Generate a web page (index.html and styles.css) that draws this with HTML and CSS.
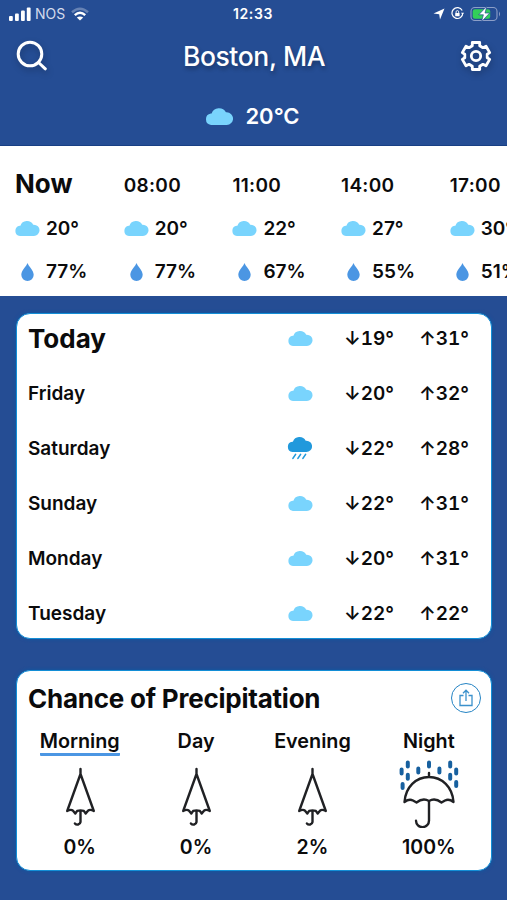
FILE: index.html
```html
<!DOCTYPE html>
<html lang="en">
<head>
  <meta charset="UTF-8" />
  <meta name="viewport" content="width=device-width, initial-scale=1.0"/>
  <title>Weather - Boston, MA</title>
  <link rel="stylesheet" href="styles.css">
</head>
<body>
  <!-- Shared icons -->
  <svg class="sprite" aria-hidden="true">
    <symbol id="cloud" viewBox="0 0 25 16">
      <path d="M5.400 16A5.200 5.200 0 0 1 5.300 5.700h.6A7 7 0 0 1 18.700 4.700h.7A5.600 5.600 0 0 1 19.400 16z"/>
    </symbol>
    <symbol id="rain" viewBox="0 0 25 24">
      <path d="M5.400 16A5.200 5.200 0 0 1 5.300 5.700h.6A7 7 0 0 1 18.700 4.700h.7A5.600 5.600 0 0 1 19.400 16z"/>
      <path d="M8.600 18.400l-2.700 4M13.600 18.400l-2.700 4M18.600 18.400l-2.700 4" stroke="currentColor" stroke-width="1.600" stroke-linecap="round"/>
    </symbol>
    <symbol id="drop" viewBox="0 0 13 18">
      <path d="M6.500 0C7.600 3.400 12.700 7.400 12.700 11.800a6.200 6.200 0 0 1-12.400 0C.3 7.400 5.400 3.400 6.500 0z"/>
    </symbol>
    <symbol id="umbrella-closed" viewBox="0 0 60 68">
      <path d="M30.500 9v5L17.200 51q3.800-2 5.800-.3l2.300 2.800 1.900-2.600q3.300-1 6.600 0l1.900 2.600 2.300-2.800q2-1.700 5.800.3L30.500 14M30.500 50.500v11.500a3.200 3.200 0 0 1-5.600 1.500"/>
    </symbol>
    <symbol id="umbrella-open" viewBox="0 0 60 68">
      <path d="M30 13v4M5.500 42C6.500 27 17 17 30 17s23.500 10 24.500 25q-4.500-3.500-8.500-1.500l-3.500 2q-6.500-5-12.500-1.500-6-3.500-12.500 1.500l-3.500-2q-4-2-8.500 1.500zM30 41v19.500a6.500 6.500 0 0 1-13 .2"/>
      <path class="drops" d="M8.800 2.500v4M2.600 9.500v4M8.800 14.700v4M3.600 24v4M19.300 8.500v4M30 2.500v4M40.400 8.500v4M51.200 2.500v4M57.200 9.500v4M51.200 14.700v4M57.200 22v4"/>
    </symbol>
  </svg>

  <div class="app">
    <header>
      <div class="status-bar">
        <div class="carrier">
          <svg width="22" height="14" viewBox="0 0 22 14" fill="#fff">
            <rect x="0" y="9" width="3.800" height="5" rx="1"/>
            <rect x="6" y="6.500" width="3.800" height="7.500" rx="1"/>
            <rect x="12" y="3.500" width="3.800" height="10.500" rx="1"/>
            <rect x="17.800" y="0.500" width="3.800" height="13.500" rx="1"/>
          </svg>
          <span class="carrier-name">NOS</span>
          <svg class="wifi" width="18" height="14" viewBox="0 0 18 14" fill="none" stroke="#fff" stroke-width="2.500">
            <path d="M1 5.200q8-7 16 0" opacity=".3"/>
            <path d="M3.800 8.100q5.200-4.600 10.400 0"/>
            <path d="M9 13.500L5.800 10.600q3.200-2.400 6.400 0z" fill="#fff" stroke="none"/>
          </svg>
        </div>
        <span class="clock">12:33</span>
        <div class="indicators">
          <svg width="12" height="12" viewBox="0 0 12 12" fill="#fff">
            <path d="M11.500.5L7 11.500 6.200 6.200.5 5.500z"/>
          </svg>
          <svg width="13" height="13" viewBox="0 0 13 13" fill="none" stroke="#fff">
            <path d="M11.200 3.600a5.400 5.400 0 1 0 .6 2.400" stroke-width="1.200"/>
            <path d="M10 5.700h3l-1.500 2z" fill="#fff" stroke="none"/>
            <rect x="4.200" y="5.900" width="4.400" height="3.300" rx=".5" fill="#fff" stroke="none"/>
            <path d="M5.100 6V4.900a1.300 1.300 0 0 1 2.600 0V6" stroke-width=".9"/>
          </svg>
          <svg width="31" height="16" viewBox="0 0 31 16">
            <rect x="1" y="1.500" width="26" height="13" rx="3.800" fill="none" stroke="#8d9fc8" stroke-width="1.100"/>
            <path d="M29 5.500q2 2.500 0 5z" fill="#8d9fc8"/>
            <rect x="2.700" y="3.200" width="17.500" height="9.600" rx="2.200" fill="#32cf59"/>
            <path d="M16.800.3L8.700 8.800h4.700L11.500 15.700 19.700 7H15z" fill="#fff" stroke="#254d94" stroke-width=".7"/>
          </svg>
        </div>
      </div>

      <div class="nav-bar">
        <svg class="nav-icon" width="32" height="32" viewBox="0 0 32 32" fill="none" stroke="#fff" stroke-width="3" stroke-linecap="round">
          <circle cx="14" cy="14" r="11.800"/>
          <path d="M22.500 22.500l6.800 6.300"/>
        </svg>
        <h1>Boston, MA</h1>
        <svg class="nav-icon" width="32" height="32" viewBox="0 0 32 32" fill="none" stroke="#fff" stroke-width="2.800" stroke-linejoin="round">
          <path d="M12.300 2.500h7.400v3.300l3.200 1.900 3.100-1.500 3.700 6.400-2.500 1.600v3.600l2.500 1.600-3.700 6.400-3.100-1.500-3.200 1.900v3.300h-7.400v-3.300l-3.200-1.900L6 25.800l-3.700-6.400 2.500-1.600v-3.600l-2.500-1.600L6 6.200l3.100 1.500 3.200-1.900z"/>
          <circle cx="16" cy="16" r="4.700"/>
        </svg>
      </div>

      <div class="current">
        <svg class="cloud"><use href="#cloud"/></svg>
        <span>20°C</span>
      </div>
    </header>

    <!-- Hourly forecast -->
    <section class="hourly">
      <div class="hour now">
        <h2>Now</h2>
        <p><svg class="cloud"><use href="#cloud"/></svg>20°</p>
        <p><svg class="drop"><use href="#drop"/></svg>77%</p>
      </div>
      <div class="hour">
        <h3>08:00</h3>
        <p><svg class="cloud"><use href="#cloud"/></svg>20°</p>
        <p><svg class="drop"><use href="#drop"/></svg>77%</p>
      </div>
      <div class="hour">
        <h3>11:00</h3>
        <p><svg class="cloud"><use href="#cloud"/></svg>22°</p>
        <p><svg class="drop"><use href="#drop"/></svg>67%</p>
      </div>
      <div class="hour">
        <h3>14:00</h3>
        <p><svg class="cloud"><use href="#cloud"/></svg>27°</p>
        <p><svg class="drop"><use href="#drop"/></svg>55%</p>
      </div>
      <div class="hour">
        <h3>17:00</h3>
        <p><svg class="cloud"><use href="#cloud"/></svg>30°</p>
        <p><svg class="drop"><use href="#drop"/></svg>51%</p>
      </div>
    </section>

    <!-- Daily forecast -->
    <section class="card daily">
      <div class="day"><h2>Today</h2><svg class="cloud"><use href="#cloud"/></svg><span>↓19°</span><span>↑31°</span></div>
      <div class="day"><h3>Friday</h3><svg class="cloud"><use href="#cloud"/></svg><span>↓20°</span><span>↑32°</span></div>
      <div class="day"><h3>Saturday</h3><svg class="rain"><use href="#rain"/></svg><span>↓22°</span><span>↑28°</span></div>
      <div class="day"><h3>Sunday</h3><svg class="cloud"><use href="#cloud"/></svg><span>↓22°</span><span>↑31°</span></div>
      <div class="day"><h3>Monday</h3><svg class="cloud"><use href="#cloud"/></svg><span>↓20°</span><span>↑31°</span></div>
      <div class="day"><h3>Tuesday</h3><svg class="cloud"><use href="#cloud"/></svg><span>↓22°</span><span>↑22°</span></div>
    </section>

    <!-- Precipitation -->
    <section class="card precipitation">
      <div class="card-header">
        <h2>Chance of Precipitation</h2>
        <button class="share" aria-label="Share">
          <svg width="14" height="18" viewBox="0 0 14 18" fill="none" stroke="currentColor" stroke-width="1.300">
            <path d="M4.500 6.500H1v10h12v-10H9.500M7 12V1.300M4 4.200l3-3 3 3"/>
          </svg>
        </button>
      </div>
      <div class="periods">
        <div class="period">
          <h3 class="active">Morning</h3>
          <svg class="umbrella"><use href="#umbrella-closed"/></svg>
          <p>0%</p>
        </div>
        <div class="period">
          <h3>Day</h3>
          <svg class="umbrella"><use href="#umbrella-closed"/></svg>
          <p>0%</p>
        </div>
        <div class="period">
          <h3>Evening</h3>
          <svg class="umbrella"><use href="#umbrella-closed"/></svg>
          <p>2%</p>
        </div>
        <div class="period">
          <h3>Night</h3>
          <svg class="umbrella"><use href="#umbrella-open"/></svg>
          <p>100%</p>
        </div>
      </div>
    </section>
  </div>
</body>
</html>
```
FILE: styles.css
```css
:root {
  --bg-page: #254d94;
  --bg-panel: #ffffff;
  --text-dark: #0b0b0c;
  --cloud: #79d4fd;
  --rain: #2199dc;
  --drop: #4b96e3;
  --card-border: #138ed6;
  --card-shadow: #14559f;
}
* { box-sizing: border-box; margin: 0; padding: 0; }
body {
  background: var(--bg-page);
  color: var(--text-dark);
  font-family: Inter, "Liberation Sans", sans-serif;
  font-size: 19px;
  font-weight: 580;
}
svg { display: block; flex: none; }
h2 { font-size: 26px; font-weight: 700; }
h3 { font-size: 19px; font-weight: 580; }
.sprite {
  position: absolute;
  width: 0;
  height: 0;
}
.app {
  width: 507px;
  height: 900px;
  overflow: hidden;
}

/* HEADER */
header {
  height: 146px;
  border-bottom: 1px solid #183f84;
  color: #fff;
}
.status-bar {
  display: grid;
  grid-template-columns: 1fr auto 1fr;
  align-items: center;
  height: 27px;
  padding: 0 6px 0 9px;
  font-size: 14px;
}
.carrier, .indicators {
  display: flex;
  align-items: center;
}
.carrier-name {
  margin: 0 6px 0 4px;
  color: #d3dbec;
  font-weight: 400;
}
.clock {
  margin-right: 4px;
  letter-spacing: 0.6px;
}
.indicators {
  justify-content: flex-end;
  gap: 6px;
}
.nav-bar {
  display: flex;
  align-items: center;
  justify-content: space-between;
  height: 58px;
  padding: 0 15px 0 16px;
}
.nav-bar h1 {
  font-size: 26.5px;
  font-weight: 450;
  letter-spacing: -0.4px;
  text-shadow: 1px 3px 4px rgba(0,0,0,0.3);
}
.nav-icon { filter: drop-shadow(1px 3px 3px rgba(0,0,0,0.25)); }
.current {
  display: flex;
  align-items: center;
  justify-content: center;
  gap: 12px;
  height: 61px;
  padding-right: 2px;
  font-size: 22px;
  font-weight: 600;
}

/* ICONS */
.cloud {
  width: 26px;
  height: 16px;
  margin: -2px -1px 0 0;
  fill: var(--cloud);
}
.rain {
  width: 25px;
  height: 24px;
  margin-top: -1px;
  color: var(--rain);
  fill: var(--rain);
}
.drop {
  width: 13px;
  height: 18px;
  margin: 0 6px;
  fill: var(--drop);
}
.current .cloud {
  width: 28px;
  height: 18px;
  margin: 0;
}

/* HOURLY */
.hourly {
  display: flex;
  height: 150px;
  padding: 17px 0 0 15px;
  background: var(--bg-panel);
  overflow: hidden;
}
.hour {
  flex: 0 0 108.700px;
}
.hour h2, .hour h3 {
  height: 44px;
  line-height: 46px;
}
.hour h2 { line-height: 41px; }
.hour h3 { letter-spacing: 0.3px; }
.hour p {
  display: flex;
  align-items: center;
  gap: 6px;
  height: 43px;
}
.hour .cloud { margin: -1px 0 0 -1px; }

/* CARDS */
.card {
  width: 476px;
  margin: 17px 0 0 16px;
  border: 1.500px solid var(--card-border);
  border-radius: 14px;
  background: var(--bg-panel);
  box-shadow: 0 0 3px 1px var(--card-shadow);
}
.daily {
  height: 326px;
}
.day {
  display: grid;
  grid-template-columns: 259px 57px 75px 1fr;
  align-items: center;
  height: 55px;
  padding-left: 11px;
}
.day span { font-variant-numeric: tabular-nums; }
.day:first-child {
  height: 52px;
  padding-bottom: 3px;
}

/* PRECIPITATION */
.precipitation {
  height: 201px;
  margin-top: 31px;
}
.card-header {
  display: flex;
  align-items: center;
  justify-content: space-between;
  height: 53px;
  padding: 0 10.500px 0 11px;
}
.card-header h2 {
  padding-top: 2px;
  letter-spacing: -0.23px;
}
.share {
  display: flex;
  align-items: center;
  justify-content: center;
  width: 30px;
  height: 30px;
  border: 1.500px solid #2584c4;
  border-radius: 50%;
  background: none;
  color: #3b91cc;
}
.periods {
  display: grid;
  grid-template-columns: repeat(4, 116.400px);
  margin-left: 4.500px;
}
.period {
  display: flex;
  flex-direction: column;
  align-items: center;
}
.period h3 {
  height: 32px;
  line-height: 34px;
  font-size: 19.800px;
}
.period h3.active {
  border-bottom: 3px solid var(--drop);
  border-radius: 1px;
}
.umbrella {
  width: 60px;
  height: 68px;
  margin-top: 4px;
  fill: none;
  stroke: #202124;
  stroke-width: 2.400;
  stroke-linecap: round;
  stroke-linejoin: round;
}
.drops {
  stroke: #17609f;
  stroke-width: 4;
}
.period p {
  height: 36px;
  font-size: 19.500px;
  line-height: 39px;
}
```
